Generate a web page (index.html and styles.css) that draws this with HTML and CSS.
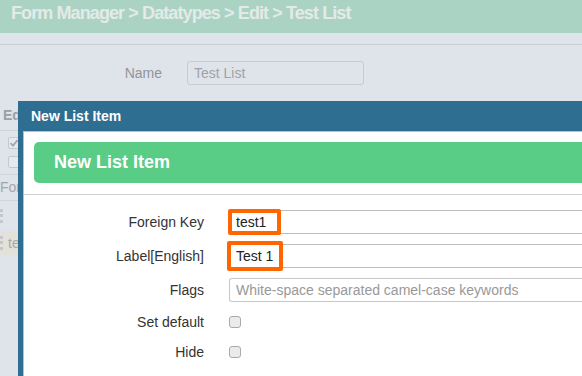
FILE: index.html
```html
<!DOCTYPE html>
<html lang="en">
<head>
    <meta charset="UTF-8">
    <title>Form Manager - New List Item</title>
    <link rel="stylesheet" href="styles.css">
</head>
<body>
    <div class="page">
        <div class="topbar">
            <h1>Form Manager &gt; Datatypes &gt; Edit &gt; Test List</h1>
        </div>
        <div class="toolbar"></div>

        <div class="name-row">
            <label>Name</label>
            <div class="name-input">Test List</div>
        </div>

        <div class="bg-table">
            <div class="bg-head">Ed</div>
            <div class="bg-checks">
                <span class="bg-box"><svg width="10" height="10" viewBox="0 0 10 10"><path d="M1.5 5.2 L4 7.6 L8.6 2.2" fill="none" stroke="#a3a7ab" stroke-width="1.8"/></svg></span>
                <span class="bg-box"></span>
            </div>
            <div class="bg-text">For</div>
            <div class="bg-dots"><span class="dots"></span></div>
            <div class="bg-item"><span class="dots"></span><span>te</span></div>
        </div>
    </div>

    <div class="modal">
        <div class="modal-header">New List Item</div>
        <div class="modal-body">
            <div class="modal-content">
                <div class="banner">New List Item</div>

                <div class="form">
                    <label>Foreign Key</label>
                    <div class="field">
                        <input type="text" value="test1">
                        <span class="mark mark-key"></span>
                    </div>

                    <label>Label[English]</label>
                    <div class="field">
                        <input type="text" value="Test 1">
                        <span class="mark mark-label"></span>
                    </div>

                    <label>Flags</label>
                    <div class="field">
                        <input type="text" class="rounded" placeholder="White-space separated camel-case keywords">
                    </div>

                    <label class="check-label">Set default</label>
                    <div class="check-field"><input type="checkbox"></div>

                    <label class="check-label">Hide</label>
                    <div class="check-field"><input type="checkbox"></div>
                </div>
            </div>
        </div>
    </div>
</body>
</html>
```

FILE: styles.css
```css
body {
    margin: 0;
    padding: 0;
    width: 582px;
    height: 376px;
    overflow: hidden;
    position: relative;
    background: #dfe3ea;
    font-family: 'Liberation Sans', Arial, sans-serif;
    font-size: 14px;
    color: #333;
}

/* background page (dimmed) */
.topbar {
    height: 33px;
    background: #abd3c3;
    padding-left: 11px;
}

.topbar h1 {
    margin: 0;
    font-size: 18px;
    line-height: 26px;
    letter-spacing: -0.9px;
    color: #e4eae8;
}

.toolbar {
    height: 11px;
    border-bottom: 1px solid #c9cfd6;
}

.name-row {
    display: grid;
    grid-template-columns: 162px 177px;
    column-gap: 25px;
    align-items: center;
    padding-top: 16px;
}

.name-row label {
    text-align: right;
    color: #919599;
}

.name-input {
    height: 22px;
    line-height: 22px;
    border: 1px solid #c6cbd1;
    border-radius: 3px;
    padding-left: 6px;
    color: #a0a4a8;
}

.bg-table {
    margin-top: 16px;
}

.bg-head {
    height: 29px;
    line-height: 29px;
    padding-left: 3px;
    font-weight: bold;
    color: #9b9fa4;
    border-bottom: 1px solid #cfd4da;
}

.bg-checks {
    height: 44px;
    display: flex;
    flex-direction: column;
    gap: 7px;
    padding: 6px 0 0 8px;
    box-sizing: border-box;
    border-bottom: 1px solid #cfd4da;
}

.bg-box {
    width: 10px;
    height: 10px;
    border: 1px solid #c5c9ce;
    border-radius: 2px;
    background: #e6e9ee;
    display: flex;
    align-items: center;
    justify-content: center;
}

.bg-text {
    height: 25px;
    line-height: 25px;
    color: #a3a7ab;
    border-bottom: 1px solid #cfd4da;
}

.bg-dots {
    height: 30px;
    display: flex;
    align-items: center;
}

.bg-item {
    height: 24px;
    background: #e3e1da;
    display: flex;
    align-items: center;
    gap: 5px;
    color: #a9aaa8;
}

.dots {
    width: 0;
    height: 14px;
    border-left: 3px dotted #c4c8cc;
}

/* modal, runs off the right and bottom edge of the window */
.modal {
    position: absolute;
    left: 18px;
    top: 101px;
    right: 0;
    bottom: 0;
    background: #fff;
    display: flex;
    flex-direction: column;
}

.modal-header {
    height: 30px;
    line-height: 30px;
    padding-left: 13px;
    background: #2e6e90;
    color: #fff;
    font-weight: bold;
    font-size: 14px;
}

.modal-body {
    flex: 1;
    border-left: 5px solid #2e6e90;
}

.modal-content {
    border-left: 1px solid #a9c5d5;
    border-top: 1px solid #a9c5d5;
    height: 100%;
    padding-top: 10px;
    box-sizing: border-box;
}

.banner {
    margin-left: 10px;
    height: 41px;
    line-height: 41px;
    padding-left: 20px;
    background: #59cc86;
    border-radius: 5px 0 0 5px;
    color: #fff;
    font-weight: bold;
    font-size: 18px;
}

.form {
    margin-top: 11px;
    border-top: 1px solid #d0d0d0;
    padding-top: 15px;
    display: grid;
    grid-template-columns: 180px 1fr;
    column-gap: 25px;
    row-gap: 10px;
    align-items: center;
}

.form label {
    text-align: right;
    color: #333;
}

.field {
    position: relative;
    height: 24px;
}

.field input {
    width: 100%;
    height: 24px;
    box-sizing: border-box;
    border: 1px solid #bdbdbd;
    border-right: none;
    border-radius: 0;
    padding: 0 6px;
    font-family: 'Liberation Sans', Arial, sans-serif;
    font-size: 14px;
    color: #222;
    outline: none;
}

.field input.rounded {
    border-color: #c8c8c8;
    border-radius: 3px 0 0 3px;
}

.field input::placeholder {
    color: #999;
}

.mark {
    position: absolute;
    border: 4px solid #ff6600;
    border-radius: 2px;
}

.mark-key {
    left: -1px;
    top: -1px;
    width: 45px;
    height: 18px;
}

.mark-label {
    left: -2px;
    top: -3px;
    width: 48px;
    height: 22px;
}

.check-field {
    height: 20px;
    display: flex;
    align-items: center;
}

.check-field input {
    appearance: none;
    margin: 0;
    width: 12px;
    height: 12px;
    border: 1px solid #a9a9a9;
    border-radius: 3px;
    background: #ebebeb;
}
```
